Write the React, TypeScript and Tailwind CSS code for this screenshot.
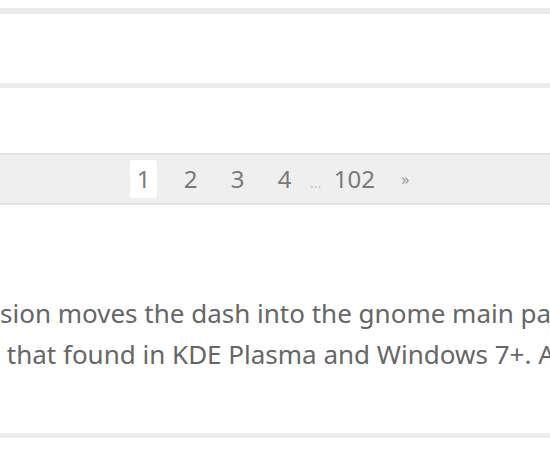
const PAGES = ['1', '2', '3', '4']

export default function App() {
  return (
    <div className="w-[550px] h-[450px] bg-white overflow-hidden" style={{ fontFamily: '"Noto Sans", "Open Sans", sans-serif' }}>
      <div className="h-[8px]" />
      <div className="h-[6px] bg-[#ececec]" />
      <div className="h-[69px]" />
      <div className="h-[5px] bg-[#ececec]" />
      <div className="h-[65px]" />

      {/* pagination */}
      <div className="h-[52px] bg-[#efefef] border-y-2 border-[#e2e2e2] flex items-center pl-[130px] text-[24px] text-[#7a7a7a]">
        {PAGES.map((p, i) => (
          <span
            key={p}
            className={`w-[27px] h-[38px] flex items-center justify-center rounded-[3px] mr-[20px] ${i === 0 ? 'bg-white' : ''}`}
          >
            {p}
          </span>
        ))}
        <span className="-ml-[8px] mr-[8px] text-[14px] text-[#c4c4c4] self-end mb-[10px]">...</span>
        <span className="w-[50px] text-center">102</span>
        <span className="ml-[22px] text-[16px] text-[#999]">»</span>
      </div>

      {/* text */}
      <div className="mt-[88px] text-[26px] leading-[41px] text-[#666] whitespace-nowrap overflow-hidden">
        <p>sion moves the dash into the gnome main pa</p>
        <p>&nbsp;that found in KDE Plasma and Windows 7+. A</p>
      </div>

      <div className="mt-[58px] h-[5px] bg-[#ececec]" />
    </div>
  )
}
